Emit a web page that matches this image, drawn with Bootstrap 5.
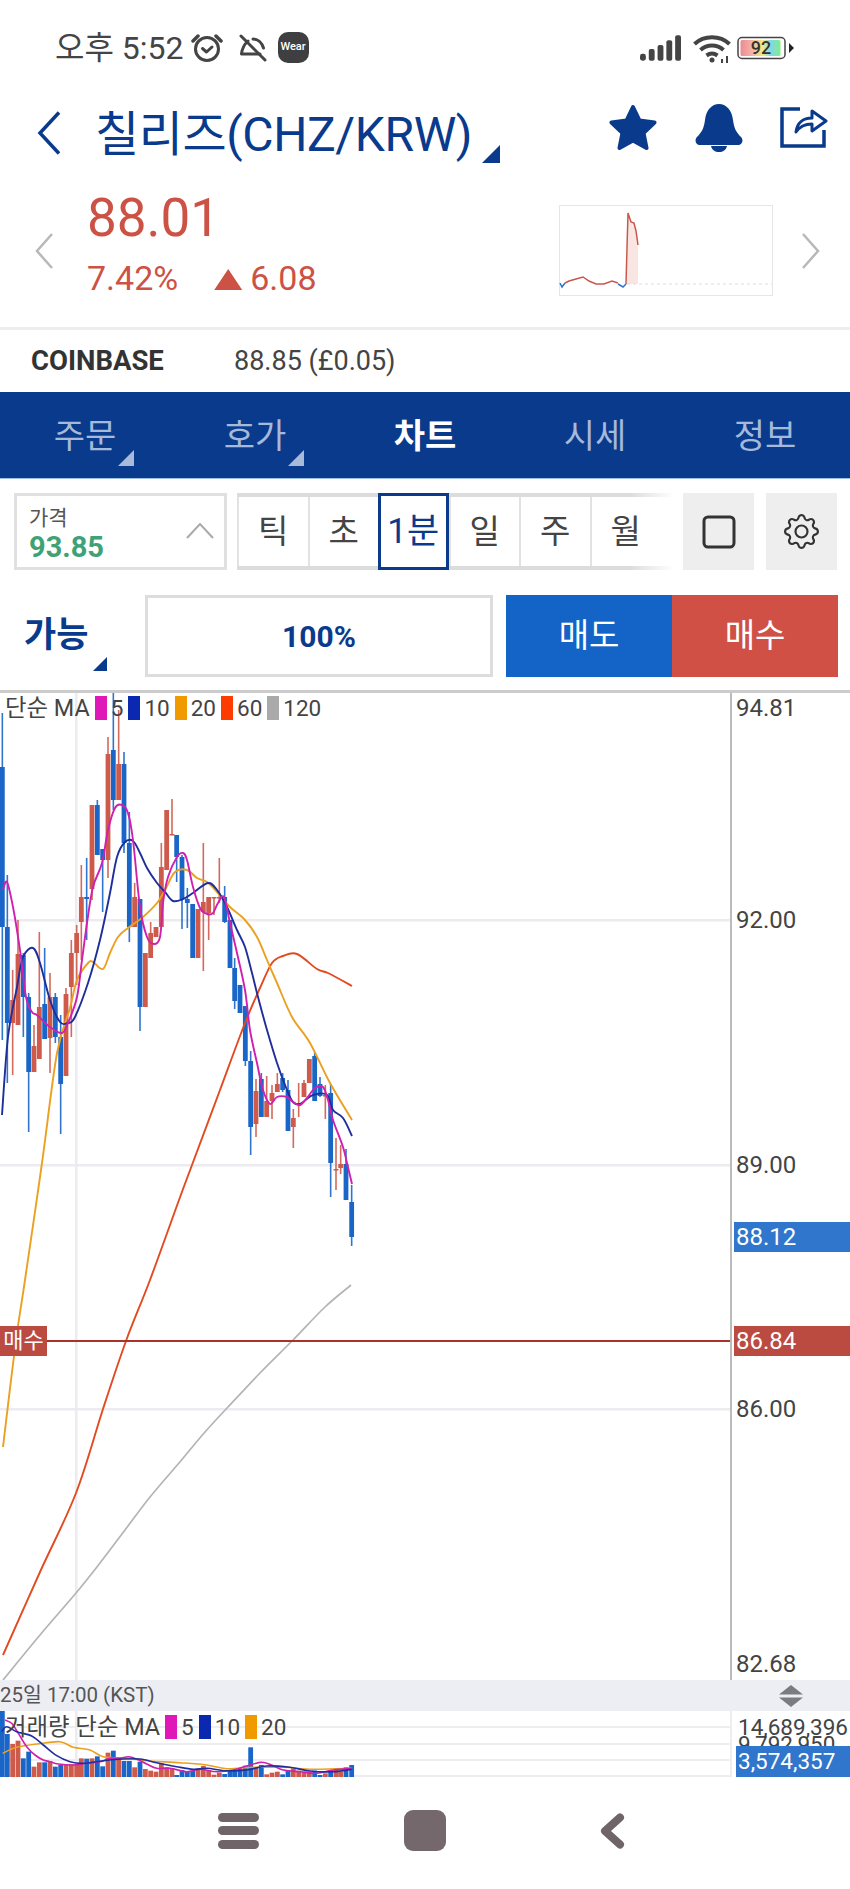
<!DOCTYPE html>
<html lang="ko">
<head>
    <meta charset="UTF-8">
    <title>칠리즈 차트</title>
    <link href="https://cdn.jsdelivr.net/npm/bootstrap@5.3.0/dist/css/bootstrap.min.css" rel="stylesheet">
    <style>
        body { width: 850px; height: 1889px; overflow: hidden; background: #fff; font-family: Roboto, "Noto Sans CJK KR", sans-serif; color: #3e3e42; }
        .tri { position: absolute; width: 0; height: 0; border-style: solid; border-color: transparent; }

        .status-row { height: 95px; padding: 0 55px 0 55px; }
        .status-time { font-size: 32px; color: #444; margin-right: 7px; line-height: 1; }
        .status-row svg { display: block; flex: none; }
        .wear-badge { width: 31px; height: 31px; margin-left: 3px; border-radius: 10px; background: #3f3f42; color: #fff; font-size: 11px; font-weight: 500; }
        .sig-ic { margin-right: 12px; }

        .title-row { height: 75px; padding-left: 37px; position: relative; color: #0a3a8c; }
        .title-text { font-size: 48px; margin: 4px 0 0 34px; line-height: 1; letter-spacing: -.4px; }
        .title-tri { left: 482px; top: 50px; border-width: 0 0 18px 18px; border-bottom-color: #0a3a8c; }
        .title-icons { position: absolute; left: 609px; top: 9px; gap: 38px; }
        .share-ic { margin-left: -1px; }

        .price-row { height: 160px; padding-left: 35px; border-bottom: 3px solid #eee; }
        .price-col { margin-left: 34px; width: 472px; }
        .price-now { font-size: 53px; line-height: 58px; color: #cc5245; margin-top: 19px; }
        .price-sub { font-size: 34px; line-height: 40px; color: #cc5245; margin-top: 11px; }
        .price-tri { display: inline-block; width: 28px; height: 21px; background: #cc5245; clip-path: polygon(50% 0, 100% 100%, 0 100%); margin: 0 8px 0 36px; }
        .spark-box { width: 214px; height: 91px; margin-top: 35px; flex: none; }
        .side-chev { flex: none; margin-top: 63px; }
        .side-chev-r { margin-left: 29px; }

        .exch-row { height: 62px; padding-left: 31px; }
        .exch-name { width: 203px; font-size: 27.5px; font-weight: 700; color: #333; }
        .exch-val { font-size: 27px; color: #444; }

        .tab-bar { height: 87px; background: #0a3a8c; border-bottom: 1px solid #9cc0e0; }
        .tab-bar .nav-link { position: relative; height: 86px; padding: 0; font-size: 34px; line-height: 88px; color: #a5b9db; }
        .tab-bar .nav-link.on { color: #fff; font-weight: 700; }
        .tab-tri { right: 36px; bottom: 12px; border-width: 0 0 16px 16px; border-bottom-color: #a9b9d9; }

        .tool-row { height: 77px; margin-top: 14px; padding-left: 14px; }
        .type-box { position: relative; width: 213px; height: 77px; border: 3px solid #e0e0e0; margin-right: 10px; padding: 9px 0 0 12px; }
        .type-label { font-size: 21px; line-height: 27px; color: #555; }
        .type-val { font-size: 29px; line-height: 31px; font-weight: 700; color: #3fa277; }
        .type-box svg { position: absolute; left: 169px; top: 27px; }
        .seg-wrap { width: 436px; height: 77px; border-top: 4px solid; border-bottom: 4px solid; border-image: linear-gradient(to right, #dcdcdc 90%, #fff) 1; margin-right: 10px; }
        .seg-btn { position: relative; width: 70.5px; height: 69px; padding: 0; border: 0; border-left: 2px solid #e2e2e2; border-radius: 0; font-size: 33px; line-height: 1; color: #444; background: #fff; }
        .seg-btn.on { color: #0a3a8c; border: 3px solid #0a3a8c; margin-top: -4px; height: 77px; z-index: 1; font-size: 35px; white-space: nowrap; }
        .icon-btn { width: 71px; height: 77px; background: #eee; margin-right: 12px; }

        .order-row { height: 82px; margin-top: 25px; padding-left: 24px; }
        .able-box { position: relative; width: 121px; font-size: 35px; font-weight: 700; color: #0a3a8c; line-height: 82px; }
        .able-tri { left: 69px; bottom: 6px; border-width: 0 0 14px 14px; border-bottom-color: #0a3a8c; }
        .pct-box { width: 348px; height: 82px; border: 3px solid #ddd; font-size: 30px; font-weight: 700; color: #0a3a8c; margin-right: 13px; }
        .side-btn { width: 166px; height: 82px; border: 0; border-radius: 0; padding: 0; font-size: 33px; color: #fff; }
        .side-sell { background: #1464c8; }
        .side-buy { background: #d05046; }

        .chart-main { height: 990px; margin-top: 13px; border-top: 3px solid #ccc; }
        .plot-pane { position: relative; width: 730px; flex: none; }
        .plot-pane svg { position: absolute; left: 0; top: 0; display: block; }
        .axis-pane { position: relative; flex: 1; border-left: 2px solid #bbb; }
        .legend-row { position: absolute; left: 5px; top: 1px; font-size: 22.5px; line-height: 29px; color: #444; }
        .legend-title { font-size: 23.4px; }
        .legend-sw { width: 12px; height: 24px; margin: 2px 4px 0 5px; }
        .legend-vol { top: 2px; }
        .axis-lbl { position: absolute; left: 4px; font-size: 24px; line-height: 30px; color: #444; }
        .axis-tag { position: absolute; left: 2px; right: 0; height: 30px; padding-left: 2px; font-size: 24px; line-height: 30px; color: #fff; }
        .tag-blue { background: #2f76cc; }
        .tag-red { background: #bb4a40; }
        .buy-tag { position: absolute; left: 0; top: 633px; width: 47px; height: 30px; background: #bb4a40; color: #fff; font-size: 22px; line-height: 30px; text-align: center; }

        .time-bar { height: 31px; background: #eceef3; font-size: 20.5px; color: #555; line-height: 31px; }
        .time-bar svg { margin-right: 46px; }

        .vol-pane { height: 66px; }
        .vol-lbl { position: absolute; left: 6px; font-size: 22.5px; line-height: 26px; color: #444; white-space: nowrap; }
        .vol-lbl-a { top: 3px; }
        .vol-lbl-b { top: 20px; }
        .vol-tag { position: absolute; left: 4px; right: 0; top: 35px; height: 31px; padding-left: 2px; background: #2f76cc; color: #fff; font-size: 22.5px; line-height: 31px; }
        .vol-pane .axis-pane { border-left: 2px solid #eee; }

        .nav-row { height: 112px; padding-bottom: 5px; }
        .nav-slot { width: 187px; }
    </style>
</head>
<body>
    <!-- status bar -->
    <div class="status-row d-flex align-items-center">
        <span class="status-time">오후 5:52</span>
        <svg width="32" height="30" viewBox="0 0 32 30" class="me-3" fill="none" stroke="#444" stroke-width="3" stroke-linecap="round" stroke-linejoin="round">
            <circle cx="16" cy="16" r="11.5"/>
            <path d="M2 8 7 3M30 8 25 3" stroke-width="3.5"/>
            <path d="M11.5 15.5 15.5 19 21 14"/>
        </svg>
        <svg width="28" height="28" viewBox="0 0 28 28" fill="none" stroke="#444" stroke-width="3" stroke-linecap="round" stroke-linejoin="round" class="me-2">
            <path d="M2 2 26 26"/>
            <path d="M9 7C4.500 11 3 15 2.500 20H21M14 5C19 5 23 9 24.500 14"/>
        </svg>
        <span class="wear-badge d-flex align-items-center justify-content-center">Wear</span>
        <div class="ms-auto d-flex align-items-center">
            <svg width="41" height="28" viewBox="0 0 42 28" class="sig-ic" fill="#444">
                <rect x="0" y="20" width="6" height="7" rx="2.500"/>
                <rect x="9" y="15" width="6" height="12" rx="2"/>
                <rect x="18" y="11" width="6" height="16" rx="2"/>
                <rect x="27" y="6" width="6" height="21" rx="2"/>
                <rect x="36" y="1" width="6" height="26" rx="2"/>
            </svg>
            <svg width="40" height="30" viewBox="0 0 40 30" fill="none" stroke="#444" stroke-width="4" class="me-1">
                <path d="M1.500 11C11 2 27 2 36.500 11"/>
                <path d="M7.500 17C14 11 24 11 30.500 17"/>
                <path d="M13.500 22.500C17 20 21 20 24.500 22.500"/>
                <circle cx="19" cy="27" r="2.500" fill="#444" stroke="none"/>
                <path d="M29 26v4M34 23v7" stroke-width="2"/>
            </svg>
            <svg width="58" height="24" viewBox="0 0 58 24">
                <defs>
                    <linearGradient id="battFill">
                        <stop offset="0" stop-color="#ee8a92"/>
                        <stop offset=".3" stop-color="#f2b6a6"/>
                        <stop offset=".55" stop-color="#f4ea80"/>
                        <stop offset=".75" stop-color="#7fd8ec"/>
                        <stop offset="1" stop-color="#85ec85"/>
                    </linearGradient>
                </defs>
                <rect x="1" y="1.500" width="47" height="21" rx="4" fill="#fff" stroke="#444" stroke-width="1.500"/>
                <rect x="3.500" y="4" width="40" height="16" rx="1.500" fill="url(#battFill)"/>
                <path d="M52 7 57 12 52 17Z" fill="#222"/>
                <text x="24" y="18" text-anchor="middle" font-family="Roboto, sans-serif" font-size="18" font-weight="500" fill="#333">92</text>
            </svg>
        </div>
    </div>

    <!-- title -->
    <div class="title-row d-flex align-items-center">
        <svg width="24" height="44" viewBox="0 0 24 44" fill="none" stroke="#0a3a8c" stroke-width="3.500" class="flex-shrink-0"><path d="M22 1.500 3 22 22 42.500"/></svg>
        <span class="title-text">칠리즈(CHZ/KRW)</span>
        <span class="tri title-tri"></span>
        <div class="title-icons d-flex align-items-start">
            <svg width="48" height="47" viewBox="0 0 48 47" fill="#0a3a8c" stroke="#0a3a8c" stroke-width="4" stroke-linejoin="round"><path d="M24 3 30.500 16.500 45.500 18.500 34.500 29 37.500 44 24 36.500 10.500 44 13.500 29 2.500 18.500 17.500 16.500Z"/></svg>
            <svg width="48" height="48" viewBox="0 0 48 48" fill="#0a3a8c"><path d="M24 0C31 0 37 6 38 16 39 24 41 28 46 33 49 36 47 41 43 41H5C1 41 -1 36 2 33 7 28 9 24 10 16 11 6 17 0 24 0Z"/><path d="M16 42H32C31 46 28 48 24 48S17 46 16 42Z"/></svg>
            <svg width="48" height="44" viewBox="0 0 48 44" fill="none" stroke="#0a3a8c" stroke-width="3.500" class="share-ic"><path d="M20 5H2V42H44V26"/><path d="M16 28C17 19 23 14 32 14V7L46 17 32 27V20C25 20 20 22 16 28Z" stroke-width="3" stroke-linejoin="round"/></svg>
        </div>
    </div>

    <!-- price -->
    <div class="price-row d-flex">
        <svg width="18" height="36" viewBox="0 0 18 36" fill="none" stroke="#b8b8b8" stroke-width="2.500" class="side-chev"><path d="M17 1 2 18 17 35"/></svg>
        <div class="price-col">
            <div class="price-now">88.01</div>
            <div class="price-sub">7.42%<span class="price-tri"></span>6.08</div>
        </div>
        <svg class="spark-box" viewBox="559 205 214 91">
            <rect x="559.500" y="205.500" width="213" height="90" fill="#fff" stroke="#e6e6e6"/>
            <path d="M627 284 628 213 631 222 634 223 638 245V284Z" fill="#f9e6e3"/>
            <path d="M627 284H772" stroke="#ddd" stroke-dasharray="3 3" fill="none"/>
            <path d="M565 283 569 281 576 279 583 277 589 281 596 284 604 284 612 281 618 283" fill="none" stroke="#c8584c" stroke-width="1.500"/>
            <path d="M560 283 562 287 565 283M618 284 623 287 626 284" fill="none" stroke="#2f76cc" stroke-width="1.500"/>
            <path d="M626 284 628 213 631 222 634 223 636 231 638 245" fill="none" stroke="#c8584c" stroke-width="1.500"/>
        </svg>
        <svg width="18" height="36" viewBox="0 0 18 36" fill="none" stroke="#b8b8b8" stroke-width="2.500" class="side-chev side-chev-r"><path d="M1 1 16 18 1 35"/></svg>
    </div>

    <!-- exchange -->
    <div class="exch-row d-flex align-items-center">
        <span class="exch-name">COINBASE</span>
        <span class="exch-val">88.85 (£0.05)</span>
    </div>

    <!-- tabs -->
    <ul class="nav nav-fill tab-bar">
        <li class="nav-item"><a class="nav-link" href="#">주문<span class="tri tab-tri"></span></a></li>
        <li class="nav-item"><a class="nav-link" href="#">호가<span class="tri tab-tri"></span></a></li>
        <li class="nav-item"><a class="nav-link on" href="#">차트</a></li>
        <li class="nav-item"><a class="nav-link" href="#">시세</a></li>
        <li class="nav-item"><a class="nav-link" href="#">정보</a></li>
    </ul>

    <!-- chart type / period -->
    <div class="tool-row d-flex">
        <div class="type-box">
            <div class="type-label">가격</div>
            <div class="type-val">93.85</div>
            <svg width="28" height="16" viewBox="0 0 28 16" fill="none" stroke="#aaa" stroke-width="2"><path d="M1 15 14 1 27 15"/></svg>
        </div>
        <div class="seg-wrap d-flex">
            <button class="btn seg-btn" type="button">틱</button>
            <button class="btn seg-btn" type="button">초</button>
            <button class="btn seg-btn on" type="button">1분</button>
            <button class="btn seg-btn" type="button">일</button>
            <button class="btn seg-btn" type="button">주</button>
            <button class="btn seg-btn" type="button">월</button>
        </div>
        <div class="icon-btn d-flex align-items-center justify-content-center">
            <svg width="34" height="34" viewBox="0 0 34 34" fill="none" stroke="#333" stroke-width="3"><rect x="2" y="2" width="30" height="30" rx="4"/></svg>
        </div>
        <div class="icon-btn d-flex align-items-center justify-content-center">
            <svg width="35" height="35" viewBox="0 0 16 16" fill="#333"><path d="M8 4.754a3.246 3.246 0 1 0 0 6.492 3.246 3.246 0 0 0 0-6.492zM5.754 8a2.246 2.246 0 1 1 4.492 0 2.246 2.246 0 0 1-4.492 0z"/><path d="M9.796 1.343c-.527-1.790-3.065-1.790-3.592 0l-.094.319a.873.873 0 0 1-1.255.52l-.292-.16c-1.640-.892-3.433.902-2.540 2.541l.159.292a.873.873 0 0 1-.52 1.255l-.319.094c-1.790.527-1.790 3.065 0 3.592l.319.094a.873.873 0 0 1 .52 1.255l-.16.292c-.892 1.640.901 3.434 2.541 2.540l.292-.159a.873.873 0 0 1 1.255.52l.094.319c.527 1.790 3.065 1.790 3.592 0l.094-.319a.873.873 0 0 1 1.255-.52l.292.16c1.640.893 3.434-.902 2.540-2.541l-.159-.292a.873.873 0 0 1 .52-1.255l.319-.094c1.790-.527 1.790-3.065 0-3.592l-.319-.094a.873.873 0 0 1-.52-1.255l.16-.292c.893-1.640-.902-3.433-2.541-2.540l-.292.159a.873.873 0 0 1-1.255-.52l-.094-.319zm-2.633.283c.246-.835 1.428-.835 1.674 0l.094.319a1.873 1.873 0 0 0 2.693 1.115l.291-.16c.764-.415 1.600.42 1.184 1.185l-.159.292a1.873 1.873 0 0 0 1.116 2.692l.318.094c.835.246.835 1.428 0 1.674l-.319.094a1.873 1.873 0 0 0-1.115 2.693l.16.291c.415.764-.42 1.600-1.185 1.184l-.291-.159a1.873 1.873 0 0 0-2.693 1.116l-.094.318c-.246.835-1.428.835-1.674 0l-.094-.319a1.873 1.873 0 0 0-2.692-1.115l-.292.16c-.764.415-1.600-.42-1.184-1.185l.159-.291A1.873 1.873 0 0 0 1.945 8.930l-.319-.094c-.835-.246-.835-1.428 0-1.674l.319-.094A1.873 1.873 0 0 0 3.060 4.377l-.16-.292c-.415-.764.42-1.600 1.185-1.184l.292.159a1.873 1.873 0 0 0 2.692-1.115l.094-.319z"/></svg>
        </div>
    </div>

    <!-- order -->
    <div class="order-row d-flex">
        <div class="able-box">가능<span class="tri able-tri"></span></div>
        <div class="pct-box d-flex align-items-center justify-content-center">100%</div>
        <button class="btn side-btn side-sell" type="button">매도</button>
        <button class="btn side-btn side-buy" type="button">매수</button>
    </div>

    <!-- price chart -->
    <div class="chart-main d-flex">
        <div class="plot-pane">
            <svg id="priceSvg" width="730" height="987" viewBox="0 693 730 987"></svg>
            <div class="legend-row d-flex" id="priceLegend"></div>
            <div class="buy-tag">매수</div>
        </div>
        <div class="axis-pane" id="priceAxis"></div>
    </div>

    <!-- time bar -->
    <div class="time-bar d-flex justify-content-between align-items-center">
        <span>25일 17:00 (KST)</span>
        <svg width="26" height="22" viewBox="0 0 26 22" fill="#7a7c82"><path d="M13 0 25 9.500H1ZM13 22 25 12.500H1Z"/></svg>
    </div>

    <!-- volume -->
    <div class="vol-pane d-flex">
        <div class="plot-pane">
            <svg id="volSvg" width="730" height="66" viewBox="0 1711 730 66"></svg>
            <div class="legend-row legend-vol d-flex" id="volLegend"></div>
        </div>
        <div class="axis-pane">
            <div class="vol-lbl vol-lbl-a">14,689,396</div>
            <div class="vol-lbl vol-lbl-b">9,792,950</div>
            <div class="vol-tag">3,574,357</div>
        </div>
    </div>

    <!-- android nav -->
    <div class="nav-row d-flex align-items-center justify-content-center">
        <div class="nav-slot d-flex justify-content-center">
            <svg width="41" height="36" viewBox="0 0 41 36" fill="#6f6468"><rect x="0" y="0" width="41" height="9" rx="4.500"/><rect x="0" y="13" width="41" height="9" rx="4.500"/><rect x="0" y="27" width="41" height="9" rx="4.500"/></svg>
        </div>
        <div class="nav-slot d-flex justify-content-center">
            <svg width="42" height="41" viewBox="0 0 42 41" fill="#75686c"><rect width="42" height="41" rx="9"/></svg>
        </div>
        <div class="nav-slot d-flex justify-content-center">
            <svg width="25" height="36" viewBox="0 0 25 36" fill="none" stroke="#6f6468" stroke-width="8" stroke-linecap="round" stroke-linejoin="round"><path d="M20 4.500 5 18 20 31.500"/></svg>
        </div>
    </div>

    <script>
    const RED = '#cd5a4b';
    const BLUE = '#1a66c8';

    // x (zoom units, 3 = 1px), colour, wick top, body top, body bottom, wick bottom in page px
    const CANDLES = [
        [7,'b',713,767,927,1040],[22,'b',875,927,1023,1083],[38,'r',970,1000,1023,1075],[54,'r',920,954,1025,1025],
        [70,'b',953,955,997,1037],[86,'b',993,997,1072,1132],[102,'r',1025,1046,1072,1072],[118,'r',932,1007,1059,1059],
        [134,'b',948,1004,1039,1039],[150,'r',973,997,1038,1073],[166,'b',993,997,1037,1043],[182,'b',1015,1037,1084,1134],
        [198,'r',988,994,1076,1076],[214,'r',940,953,987,1037],[230,'r',925,933,953,985],[244,'r',865,897,922,960],
        [260,'b',858,897,899,940],[276,'r',805,805,889,900],[292,'b',800,805,855,855],[308,'b',849,849,860,912],
        [324,'r',737,754,860,878],[340,'b',690,750,800,810],[356,'r',710,764,800,800],[372,'b',752,764,843,853],
        [388,'b',812,843,927,942],[404,'r',883,897,927,927],[420,'b',899,899,1007,1031],[436,'r',953,953,1007,1007],
        [452,'r',922,933,958,958],[468,'r',927,927,937,937],[484,'r',843,867,927,927],[500,'r',810,810,870,870],
        [516,'r',799,834,835,835],[530,'b',835,835,857,882],[546,'b',855,857,899,929],[562,'b',888,899,903,928],
        [578,'b',904,904,958,958],[594,'r',909,909,958,958],[610,'r',843,902,912,971],[626,'r',897,897,913,940],
        [642,'r',897,897,898,915],[658,'r',858,897,898,903],[674,'b',886,897,922,923],[690,'b',920,920,968,968],
        [704,'b',958,968,1001,1009],[720,'b',985,985,1013,1013],[736,'b',1006,1006,1061,1066],[752,'b',1051,1061,1127,1155],
        [768,'r',1079,1091,1124,1137],[784,'b',1073,1079,1117,1117],[800,'r',1076,1101,1117,1117],[816,'r',1085,1093,1101,1119],
        [832,'r',1073,1084,1092,1092],[848,'b',1073,1078,1090,1092],[864,'b',1080,1090,1131,1131],[880,'r',1109,1118,1127,1148],
        [896,'r',1083,1103,1105,1117],[912,'r',1080,1083,1097,1097],[928,'r',1059,1059,1083,1083],[944,'b',1052,1056,1101,1101],
        [960,'b',1077,1084,1096,1097],[976,'r',1085,1095,1096,1119],[992,'b',1084,1093,1163,1197],[1008,'r',1138,1169,1170,1190],
        [1022,'r',1145,1164,1168,1174],[1038,'b',1149,1164,1200,1200],[1055,'b',1185,1202,1237,1246]
    ];

    // volume bar tops, same order as CANDLES (zoom units from y=1660)
    const VOL_TOPS = [152,222,252,242,295,275,320,307,307,303,320,315,313,313,313,295,296,295,289,319,278,272,292,303,303,322,305,327,332,335,310,322,325,345,330,336,333,330,318,330,344,338,342,332,332,326,317,262,322,315,343,338,335,343,330,325,332,335,335,332,345,340,330,325,335,322,315];

    const MA_LINES = [
        { color: '#b4b4b4', width: 1.7, pts: [[3,1680],[40,1635],[76,1593],[100,1563],[125,1530],[150,1497],[179,1463],[205,1432],[228,1407],[260,1373],[293,1340],[325,1307],[351,1285]] },
        { color: '#e24a20', width: 1.9, pts: [[3,1655],[40,1572],[76,1493],[103,1409],[126,1341],[150,1280],[179,1200],[192,1165],[220,1090],[245,1023],[260,988],[272,963],[283,956],[297,954],[317,969],[328,973],[352,986]] },
        { color: '#eba020', width: 1.9, pts: [[3,1447],[16,1340],[25,1280],[42,1163],[57,1053],[70,1008],[77,980],[88,963],[93,962],[103,969],[110,953],[118,937],[128,928],[143,917],[157,903],[165,890],[175,872],[187,870],[197,878],[207,882],[217,892],[230,907],[245,920],[257,937],[267,960],[277,983],[292,1017],[310,1043],[330,1083],[352,1120]] },
        { color: '#1e2f9c', width: 1.9, pts: [[2,1115],[8,1037],[17,987],[23,957],[33,948],[40,963],[50,1000],[60,1022],[68,1023],[75,1017],[88,983],[100,940],[110,893],[117,857],[125,842],[133,841],[140,853],[147,868],[157,883],[165,892],[173,901],[183,899],[193,893],[208,883],[217,890],[227,907],[237,930],[245,947],[252,973],[258,997],[267,1030],[277,1063],[287,1090],[293,1102],[300,1104],[313,1095],[327,1095],[333,1110],[343,1118],[352,1136]] },
        { color: '#d020b0', width: 1.9, pts: [[3,890],[7,882],[13,907],[20,950],[26,997],[32,1012],[37,1015],[50,1027],[62,1033],[68,1023],[77,997],[82,960],[87,923],[93,887],[102,863],[108,830],[115,808],[122,805],[128,813],[133,840],[140,907],[147,937],[154,944],[160,937],[163,903],[168,877],[177,857],[183,853],[187,860],[193,887],[200,908],[207,914],[213,913],[218,903],[224,897],[230,923],[237,953],[245,990],[250,1030],[257,1063],[263,1090],[270,1104],[277,1097],[287,1097],[293,1102],[300,1105],[307,1098],[315,1088],[323,1087],[328,1100],[333,1120],[343,1147],[347,1163],[352,1184]] }
    ];

    // volume averages, x and y in zoom units
    const VOL_LINES = [
        { color: '#eba020', pts: [[8,280],[50,262],[110,252],[180,245],[220,262],[270,270],[310,290],[380,295],[450,303],[540,308],[620,315],[680,326],[760,322],[850,322],[940,328],[1055,325]] },
        { color: '#d020b0', pts: [[15,180],[35,190],[55,220],[80,260],[105,285],[130,300],[150,305],[175,312],[220,315],[260,310],[300,305],[330,295],[360,295],[385,290],[410,297],[440,312],[470,325],[510,325],[560,335],[600,328],[650,335],[700,330],[750,315],[785,307],[815,315],[850,330],[900,335],[950,340],[1000,330],[1055,325]] },
        { color: '#1e2f9c', pts: [[5,215],[20,200],[50,215],[95,228],[130,255],[170,287],[210,305],[250,310],[310,302],[370,297],[420,297],[470,308],[530,320],[580,328],[620,325],[680,332],[740,330],[800,318],[870,322],[930,333],[1000,335],[1055,328]] }
    ];

    const AXIS_LABELS = [[94.81,708],[92.00,920],[89.00,1165],[86.00,1409],[82.68,1664]];
    const AXIS_TAGS = [[88.12,1237,'tag-blue'],[86.84,1341,'tag-red']];

    // smooth path through the points
    function smoothPath(pts) {
        let d = `M${pts[0][0]} ${pts[0][1]}`;
        for (let i = 0; i < pts.length - 1; i++) {
            const p0 = pts[i - 1] || pts[i];
            const p1 = pts[i];
            const p2 = pts[i + 1];
            const p3 = pts[i + 2] || p2;
            const c1x = p1[0] + (p2[0] - p0[0]) / 6;
            const c1y = p1[1] + (p2[1] - p0[1]) / 6;
            const c2x = p2[0] - (p3[0] - p1[0]) / 6;
            const c2y = p2[1] - (p3[1] - p1[1]) / 6;
            d += `C${c1x.toFixed(1)} ${c1y.toFixed(1)} ${c2x.toFixed(1)} ${c2y.toFixed(1)} ${p2[0]} ${p2[1]}`;
        }
        return d;
    }

    function lineEl(p, width) {
        return `<path d="${smoothPath(p.pts)}" fill="none" stroke="${p.color}" stroke-width="${width}" stroke-linejoin="round"/>`;
    }

    function drawPrice() {
        let s = '';
        [920, 1165, 1409].forEach(y => { s += `<rect x="0" y="${y - 1}" width="730" height="2.500" fill="#ececf0"/>`; });
        s += '<rect x="75" y="693" width="2.500" height="987" fill="#ececf0"/>';
        CANDLES.forEach(c => {
            const x = c[0] / 3;
            const col = c[1] === 'r' ? RED : BLUE;
            s += `<rect x="${x - 0.8}" y="${c[2]}" width="1.6" height="${c[5] - c[2]}" fill="${col}" opacity=".9"/>`;
            s += `<rect x="${x - 2.4}" y="${c[3]}" width="4.8" height="${Math.max(c[4] - c[3], 1.5)}" fill="${col}"/>`;
        });
        MA_LINES.forEach(l => { s += lineEl(l, l.width); });
        s += '<rect x="47" y="1340" width="683" height="2" fill="#a8322c"/>';
        document.getElementById('priceSvg').innerHTML = s;
    }

    function drawVolume() {
        let s = '';
        [1727, 1744, 1760, 1776].forEach(y => { s += `<rect x="0" y="${y - 1}" width="730" height="2" fill="#eeeef1"/>`; });
        s += '<rect x="75" y="1711" width="2.500" height="66" fill="#ececf0"/>';
        CANDLES.forEach((c, i) => {
            const top = 1660 + VOL_TOPS[i] / 3;
            s += `<rect x="${c[0] / 3 - 2.4}" y="${top}" width="4.8" height="${1777 - top}" fill="${c[1] === 'r' ? RED : BLUE}"/>`;
        });
        VOL_LINES.forEach(l => {
            s += lineEl({ color: l.color, pts: l.pts.map(p => [+(p[0] / 3).toFixed(1), +(1660 + p[1] / 3).toFixed(1)]) }, 1.6);
        });
        document.getElementById('volSvg').innerHTML = s;
    }

    function legendHtml(title, items) {
        let html = `<span class="legend-title">${title}</span>`;
        items.forEach(it => {
            html += `<span class="legend-sw" style="background:${it[1]}"></span><span>${it[0]}</span>`;
        });
        return html;
    }

    function drawAxis() {
        const axis = document.getElementById('priceAxis');
        AXIS_LABELS.forEach(a => {
            const el = document.createElement('div');
            el.className = 'axis-lbl';
            el.style.top = (a[1] - 693 - 15) + 'px';
            el.textContent = a[0].toFixed(2);
            axis.appendChild(el);
        });
        AXIS_TAGS.forEach(a => {
            const el = document.createElement('div');
            el.className = 'axis-tag ' + a[2];
            el.style.top = (a[1] - 693 - 15) + 'px';
            el.textContent = a[0].toFixed(2);
            axis.appendChild(el);
        });
    }

    const MA_COLORS = [[5,'#e018b8'],[10,'#0a28b0'],[20,'#f09a00'],[60,'#ff3c00'],[120,'#aaaaaa']];
    document.getElementById('priceLegend').innerHTML = legendHtml('단순 MA', MA_COLORS);
    document.getElementById('volLegend').innerHTML = legendHtml('거래량 단순 MA', MA_COLORS.slice(0, 3));
    drawPrice();
    drawVolume();
    drawAxis();
    </script>
    <script src="https://cdn.jsdelivr.net/npm/bootstrap@5.3.0/dist/js/bootstrap.bundle.min.js"></script>
</body>
</html>
